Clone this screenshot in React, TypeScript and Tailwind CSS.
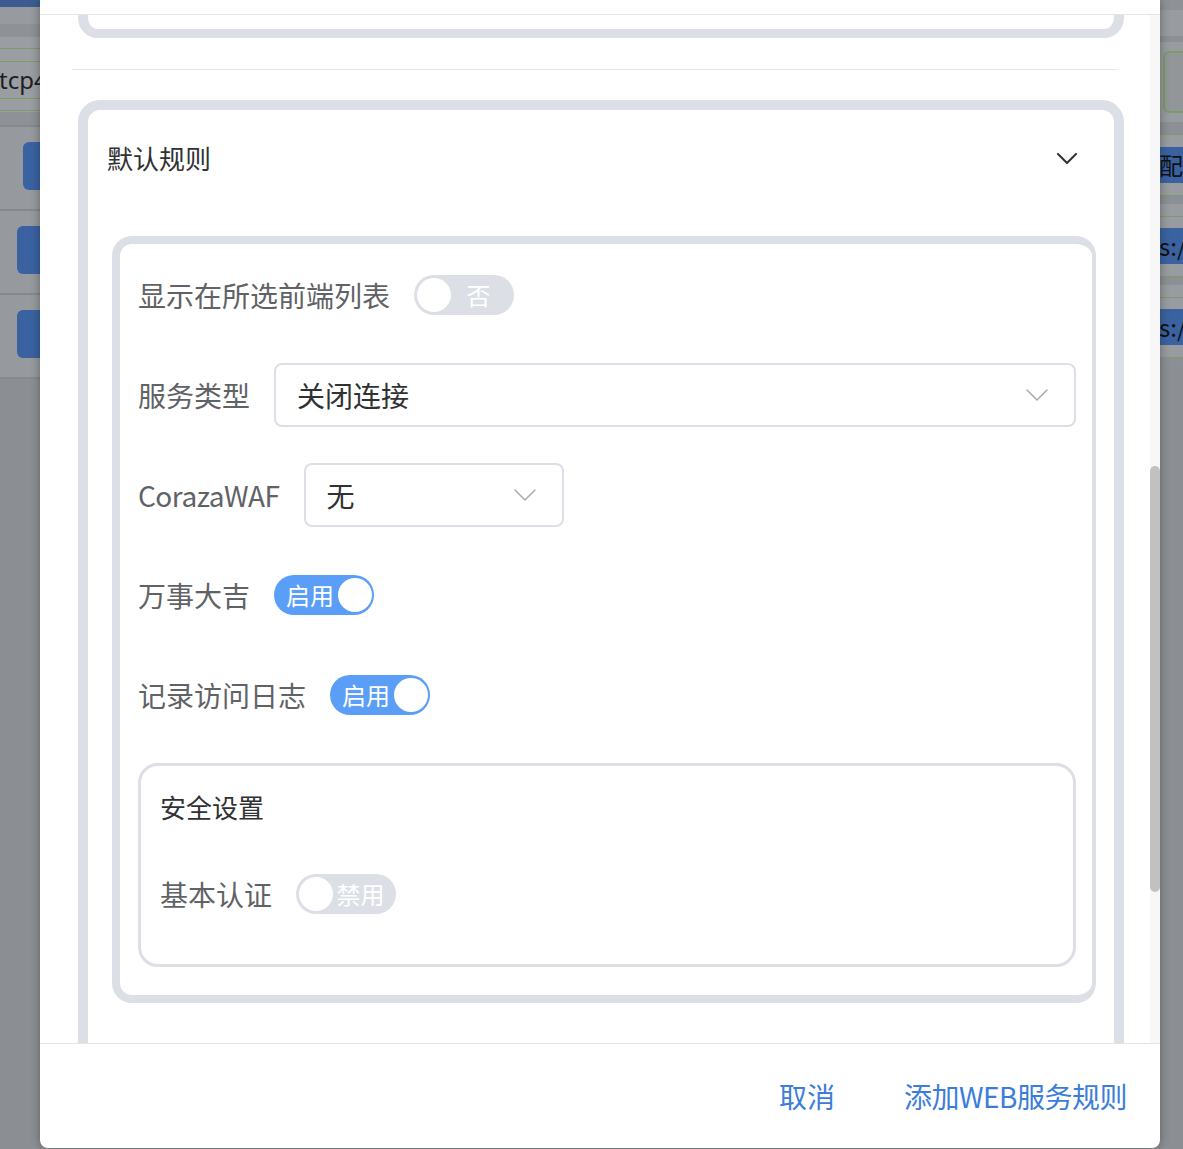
import React from "react";

function Chevron({ className, color, w = 22, h = 12, sw = 1.5 }: { className?: string; color: string; w?: number; h?: number; sw?: number }) {
  return (
    <svg className={className} width={w} height={h} viewBox={`0 0 ${w} ${h}`} fill="none">
      <polyline points={`1,1 ${w / 2},${h - 1} ${w - 1},1`} stroke={color} strokeWidth={sw} strokeLinecap="round" strokeLinejoin="round" />
    </svg>
  );
}

function Switch({ on, label }: { on: boolean; label: string }) {
  if (on) {
    return (
      <div className="flex h-[40px] w-[100px] shrink-0 items-center rounded-full bg-[#5b9ef8] pr-[2px]">
        <span className="flex-1 pl-[8px] text-center text-[24px] leading-none text-white">{label}</span>
        <span className="h-[34px] w-[34px] rounded-full bg-white" />
      </div>
    );
  }
  return (
    <div className="flex h-[40px] w-[100px] shrink-0 items-center rounded-full bg-[#dcdfe6] pl-[3px]">
      <span className="h-[34px] w-[34px] rounded-full bg-white" />
      <span className="flex-1 pr-[8px] text-center text-[24px] leading-none text-white">{label}</span>
    </div>
  );
}

function Row({ label, children, labelClass = "" }: { label: string; children: React.ReactNode; labelClass?: string }) {
  return (
    <div className="flex h-[64px] items-center gap-[24px]">
      <span className={`shrink-0 whitespace-nowrap text-[28px] leading-none text-[#606266] ${labelClass}`}>{label}</span>
      {children}
    </div>
  );
}

function Select({ value, className }: { value: string; className: string }) {
  return (
    <div className={`flex h-[64px] items-center rounded-[8px] border-2 border-[#dcdfe6] pl-[21px] pr-[26px] ${className}`}>
      <span className="flex-1 text-[28px] leading-none text-[#303133]">{value}</span>
      <Chevron color="#a8abb2" />
    </div>
  );
}

function LeftStrip() {
  return (
    <div className="flex w-[40px] shrink-0 flex-col overflow-hidden bg-[#8b8f93]">
      <div className="h-[7px] bg-[#3a5c90]" />
      <div className="h-[17px] bg-[#979a9e]" />
      <div className="h-[13px] bg-[#8e9195]" />
      <div className="flex h-[75px] flex-col bg-[#9a9da1]">
        <div className="mt-[11px] h-[1px] bg-[#7e9a69]" />
        <div className="mt-[12px] h-[1px] bg-[#7e9a69]" />
        <div className="flex h-[36px] items-center">
          <span className="-ml-[1px] whitespace-nowrap font-['Noto_Sans',sans-serif] text-[24px] leading-none text-[#1c1f24]">tcp4</span>
        </div>
        <div className="h-[1px] bg-[#7e9a69]" />
        <div className="mt-[11px] h-[1px] bg-[#7e9a69]" />
      </div>
      <div className="h-[13px] bg-[#8e9195]" />
      {[23, 17, 17].map((ml, i) => (
        <div key={i} className="flex h-[84px] flex-col border-t-[2px] border-[#85888c] bg-[#96999d] pl-[2px]">
          <div className="mt-[15px] h-[48px] rounded-l-[6px] bg-[#3a62a0]" style={{ marginLeft: ml - 2 }} />
        </div>
      ))}
      <div className="h-[2px] bg-[#85888c]" />
      <div className="flex-1 bg-[#8b8f93]" />
    </div>
  );
}

function RightStrip() {
  const band = (text: string) => (
    <div className="flex h-[36px] items-center overflow-hidden bg-[#3a62a0]">
      <span className="-ml-[1px] whitespace-nowrap font-['Noto_Sans_CJK_SC',sans-serif] text-[24px] leading-none text-[#111]">{text}</span>
    </div>
  );
  return (
    <div className="flex w-[23px] shrink-0 flex-col overflow-hidden bg-[#8b8f93]">
      <div className="h-[10px] bg-[#8e9195]" />
      <div className="h-[26px] bg-[#989b9f]" />
      <div className="h-[6px] bg-[#8c8f93]" />
      <div className="flex h-[80px] items-center bg-[#989b9f] pl-[3px]">
        <div className="h-[62px] w-full rounded-l-[6px] border-2 border-r-0 border-[#7e9a69] bg-[#939699]" />
      </div>
      <div className="h-[12px] bg-[#8c8f93]" />
      <div className="h-[1px] bg-[#7e9a69]" />
      <div className="h-[12px] bg-[#989b9f]" />
      {band("配")}
      <div className="h-[12px] bg-[#989b9f]" />
      <div className="h-[1px] bg-[#7e9a69]" />
      <div className="h-[8px] bg-[#8c8f93]" />
      <div className="h-[12px] bg-[#989b9f]" />
      <div className="h-[1px] bg-[#7e9a69]" />
      <div className="h-[11px] bg-[#989b9f]" />
      {band("s://")}
      <div className="h-[12px] bg-[#989b9f]" />
      <div className="h-[1px] bg-[#7e9a69]" />
      <div className="h-[8px] bg-[#8c8f93]" />
      <div className="h-[12px] bg-[#989b9f]" />
      <div className="h-[1px] bg-[#7e9a69]" />
      <div className="h-[11px] bg-[#989b9f]" />
      {band("s://")}
      <div className="h-[12px] bg-[#989b9f]" />
      <div className="h-[1px] bg-[#7e9a69]" />
      <div className="h-[8px] bg-[#8c8f93]" />
      <div className="flex-1 bg-[#8b8f93]" />
    </div>
  );
}

export default function App() {
  return (
    <div className="flex h-[1149px] w-full overflow-hidden bg-[#8b8f93] font-['Noto_Sans_CJK_SC','Noto_Sans',sans-serif]">
      <LeftStrip />
      <div className="relative z-10 flex h-[1148px] w-[1120px] shrink-0 flex-col rounded-b-[8px] bg-white shadow-[0_0_10px_rgba(0,0,0,0.35)]">
        <div className="h-[15px] shrink-0 border-b border-[#e4e4e4]" />
        <div className="flex h-[1028px] shrink-0 overflow-hidden">
          <div className="flex flex-1 flex-col overflow-hidden pl-[32px] pr-[33px]">
            {/* previous card bottom */}
            <div className="ml-[6px] mr-[-7px] h-[23px] shrink-0 rounded-b-[20px] border-x-[10px] border-b-[9px] border-[#dcdfe6]" />
            <div className="mt-[31px] h-[1px] shrink-0 bg-[#e4e7ed]" />
            {/* default rule card */}
            <div className="ml-[6px] mr-[-7px] mt-[30px] shrink-0 rounded-[22px] border-[10px] border-[#dcdfe6] pb-[90px]">
              <div className="flex h-[96px] items-center pl-[19px] pr-[37px]">
                <span className="flex-1 text-[26px] leading-none text-[#303133]">默认规则</span>
                <Chevron color="#303133" w={20} h={11} sw={2} />
              </div>
              <div className="ml-[24px] mr-[18px] mt-[30px] rounded-[20px] border-y-[8px] border-l-[8px] border-r-[4px] border-[#dcdfe6] pb-[28px] pl-[18px] pr-[16px] pt-[19px]">
                <div className="flex flex-col gap-[36px]">
                  <Row label="显示在所选前端列表">
                    <Switch on={false} label="否" />
                  </Row>
                  <Row label="服务类型">
                    <Select value="关闭连接" className="flex-1" />
                  </Row>
                  <Row label="CorazaWAF" labelClass="tracking-[-0.5px]">
                    <Select value="无" className="w-[260px]" />
                  </Row>
                  <Row label="万事大吉">
                    <Switch on={true} label="启用" />
                  </Row>
                  <Row label="记录访问日志">
                    <Switch on={true} label="启用" />
                  </Row>
                  <div className="rounded-[20px] border-[3px] border-[#dcdfe6] px-[19px] pb-[50px] pt-[23px]">
                    <div className="flex h-[36px] items-center text-[26px] leading-none text-[#303133]">安全设置</div>
                    <div className="mt-[49px] flex h-[40px] items-center gap-[24px]">
                      <span className="text-[28px] leading-none text-[#606266]">基本认证</span>
                      <Switch on={false} label="禁用" />
                    </div>
                  </div>
                </div>
              </div>
            </div>
          </div>
          <div className="flex w-[10px] shrink-0 flex-col bg-[#f7f7f7]">
            <div className="mt-[451px] h-[426px] rounded-full bg-[#c1c1c1]" />
          </div>
        </div>
        <div className="flex flex-1 items-center justify-end gap-[69px] border-t border-[#e4e4e4] pr-[33px]">
          <span className="text-[28px] leading-none text-[#3b7dd8]">取消</span>
          <span className="text-[28px] leading-none tracking-[-0.5px] text-[#3b7dd8]">添加WEB服务规则</span>
        </div>
      </div>
      <RightStrip />
    </div>
  );
}
